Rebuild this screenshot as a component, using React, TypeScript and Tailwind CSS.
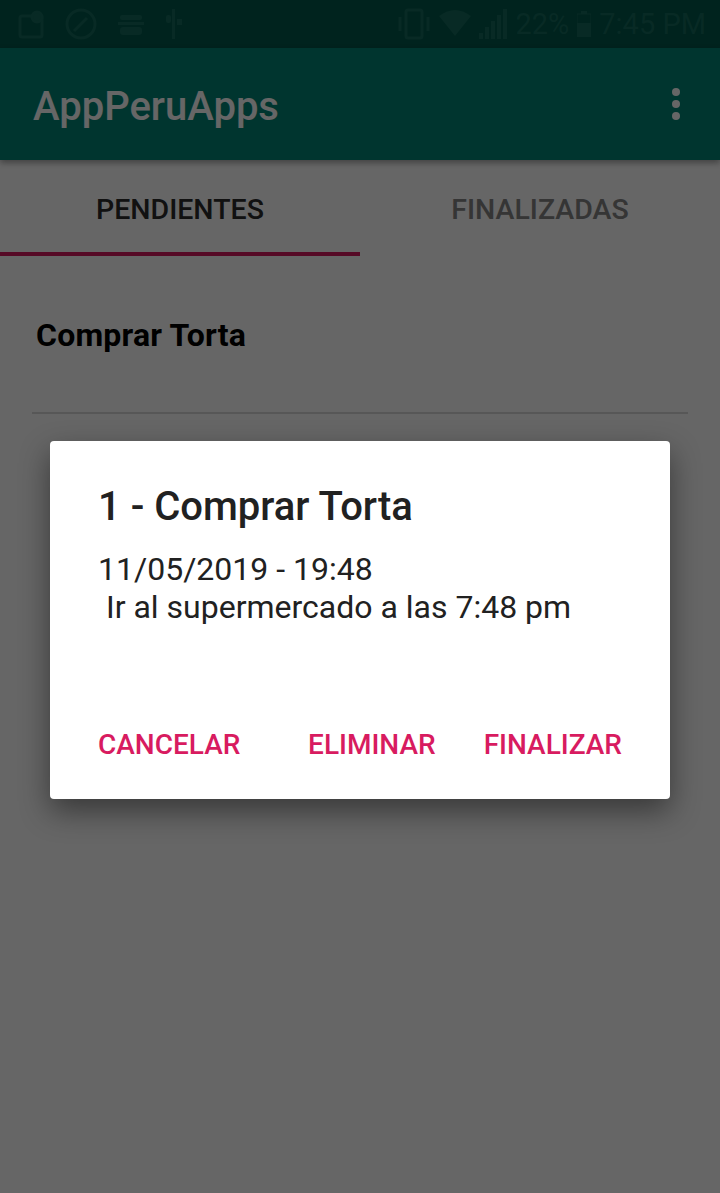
import React from "react";

const font = { fontFamily: "Roboto, 'Noto Sans', sans-serif" };

function StatusBar() {
  const c = "#146a5c";
  return (
    <div className="h-12 bg-[#00574b] flex items-center justify-between pl-[18px] pr-[14px]" style={font}>
      <div className="flex items-center gap-[20px]">
        <svg width="26" height="30" viewBox="0 0 26 30" fill="none" stroke={c} strokeWidth="3">
          <rect x="2" y="7" width="22" height="21" rx="2" />
          <circle cx="19" cy="8" r="5" fill={c} />
        </svg>
        <svg width="34" height="34" viewBox="0 0 34 34" fill="none" stroke={c} strokeWidth="3">
          <circle cx="17" cy="17" r="14" />
          <path d="M10 24 L23 11" />
        </svg>
        <svg width="26" height="26" viewBox="0 0 26 26" fill={c}>
          <rect x="2" y="4" width="22" height="5" rx="2" />
          <rect x="0" y="11" width="26" height="3" />
          <rect x="2" y="16" width="22" height="8" rx="3" />
        </svg>
        <svg width="20" height="34" viewBox="0 0 20 34" fill={c}>
          <rect x="8" y="2" width="3" height="30" />
          <rect x="2" y="8" width="5" height="8" rx="2" />
          <rect x="13" y="12" width="5" height="6" />
        </svg>
      </div>
      <div className="flex items-center gap-[8px]" style={{ color: c }}>
        <svg width="34" height="34" viewBox="0 0 34 34" fill="none" stroke={c} strokeWidth="3">
          <rect x="9" y="3" width="16" height="28" rx="2" />
          <path d="M3 10 v14 M31 10 v14" />
        </svg>
        <svg width="32" height="28" viewBox="0 0 32 28" fill={c}>
          <path d="M16 26 L0 6 Q16 -6 32 6 Z" />
        </svg>
        <svg width="28" height="30" viewBox="0 0 28 30" fill={c}>
          <rect x="0" y="24" width="4" height="6" />
          <rect x="6" y="18" width="4" height="12" />
          <rect x="12" y="12" width="4" height="18" />
          <rect x="18" y="6" width="4" height="24" />
          <rect x="24" y="0" width="4" height="30" />
        </svg>
        <span className="text-[29px] leading-none">22%</span>
        <svg width="14" height="26" viewBox="0 0 14 26" fill={c}>
          <rect x="4" y="0" width="6" height="3" />
          <rect x="0" y="12" width="14" height="14" />
          <rect x="0" y="3" width="14" height="23" fill="none" stroke={c} strokeWidth="1" />
        </svg>
        <span className="text-[29px] leading-none">7:45 PM</span>
      </div>
    </div>
  );
}

export default function App() {
  return (
    <div className="relative w-[720px] h-[1193px] overflow-hidden bg-white" style={font}>
      <StatusBar />
      <div className="relative z-10 h-[112px] bg-[#008577] flex items-center justify-between pl-[33px] pr-[40px] pt-[6px] shadow-[0_3px_6px_rgba(0,0,0,0.35)]">
        <span className="text-[40px] font-medium text-white">AppPeruApps</span>
        <div className="flex flex-col gap-[4px] items-center -mt-[6px]">
          <span className="w-[8px] h-[8px] rounded-full bg-white" />
          <span className="w-[8px] h-[8px] rounded-full bg-white" />
          <span className="w-[8px] h-[8px] rounded-full bg-white" />
        </div>
      </div>
      <div className="h-[96px] flex">
        <div className="flex-1 flex flex-col">
          <div className="flex-1 flex items-center justify-center text-[28.5px] font-medium text-[#2b2b2b] pt-[8px]">PENDIENTES</div>
          <div className="h-[4px] bg-[#D81B60]" />
        </div>
        <div className="flex-1 flex flex-col">
          <div className="flex-1 flex items-center justify-center text-[28.5px] font-medium text-[#848484] pt-[8px]">FINALIZADAS</div>
          <div className="h-[4px]" />
        </div>
      </div>
      <div className="px-[32px]">
        <div className="h-[158px] flex items-center pl-[4px] pt-[2px] border-b-2 border-[#dadada]">
          <span className="text-[32px] font-bold text-black tracking-[0.2px]">Comprar Torta</span>
        </div>
      </div>

      <div className="absolute inset-0 z-20 bg-black/60" />

      <div className="absolute z-30 left-[50px] top-[441px] w-[620px] h-[358px] bg-white rounded-[4px] shadow-[0_12px_30px_rgba(0,0,0,0.45)] flex flex-col pl-[48px] pr-[48px]">
        <div className="pt-[42px] text-[40px] leading-[48px] font-medium text-[#212121]">1 - Comprar Torta</div>
        <div className="pt-[19px] text-[32px] leading-[38px] text-[#212121]">
          <div>11/05/2019 - 19:48</div>
          <div> &nbsp;Ir al supermercado a las 7:48 pm</div>
        </div>
        <div className="flex-1" />
        <div className="flex items-center justify-between pb-[33px] text-[28px] font-medium text-[#D81B60]">
          <span>CANCELAR</span>
          <span className="ml-auto mr-[48px]">ELIMINAR</span>
          <span>FINALIZAR</span>
        </div>
      </div>
    </div>
  );
}
